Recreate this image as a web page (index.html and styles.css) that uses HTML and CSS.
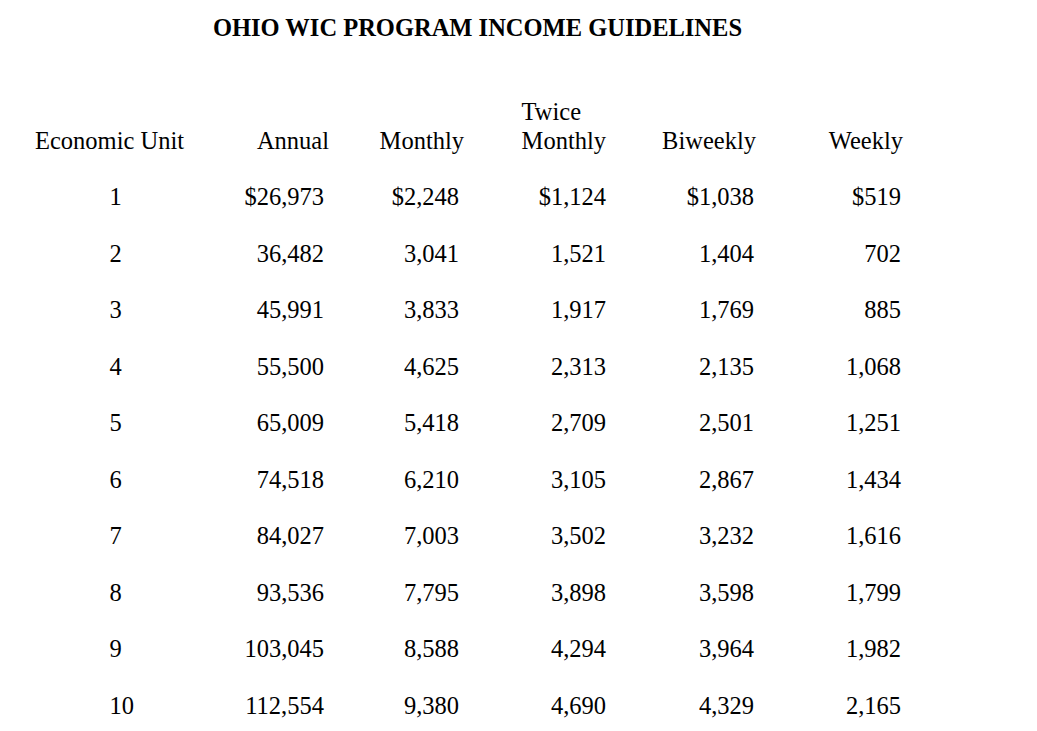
FILE: index.html
```html
<!DOCTYPE html>
<html lang="en">
<head>
<meta charset="utf-8">
<title>Ohio WIC Program Income Guidelines</title>
<link rel="stylesheet" href="styles.css">
</head>
<body>
<div class="page">
  <h1 class="title">OHIO WIC PROGRAM INCOME GUIDELINES</h1>
  <div class="table">
    <div class="th unit">Economic Unit</div>
    <div class="th annual">Annual</div>
    <div class="th monthly">Monthly</div>
    <div class="th twice">Twice<br>Monthly</div>
    <div class="th biweekly">Biweekly</div>
    <div class="th weekly">Weekly</div>

    <div class="td unit">1</div><div class="td annual">$26,973</div><div class="td monthly">$2,248</div><div class="td twice">$1,124</div><div class="td biweekly">$1,038</div><div class="td weekly">$519</div>
    <div class="td unit">2</div><div class="td annual">36,482</div><div class="td monthly">3,041</div><div class="td twice">1,521</div><div class="td biweekly">1,404</div><div class="td weekly">702</div>
    <div class="td unit">3</div><div class="td annual">45,991</div><div class="td monthly">3,833</div><div class="td twice">1,917</div><div class="td biweekly">1,769</div><div class="td weekly">885</div>
    <div class="td unit">4</div><div class="td annual">55,500</div><div class="td monthly">4,625</div><div class="td twice">2,313</div><div class="td biweekly">2,135</div><div class="td weekly">1,068</div>
    <div class="td unit">5</div><div class="td annual">65,009</div><div class="td monthly">5,418</div><div class="td twice">2,709</div><div class="td biweekly">2,501</div><div class="td weekly">1,251</div>
    <div class="td unit">6</div><div class="td annual">74,518</div><div class="td monthly">6,210</div><div class="td twice">3,105</div><div class="td biweekly">2,867</div><div class="td weekly">1,434</div>
    <div class="td unit">7</div><div class="td annual">84,027</div><div class="td monthly">7,003</div><div class="td twice">3,502</div><div class="td biweekly">3,232</div><div class="td weekly">1,616</div>
    <div class="td unit">8</div><div class="td annual">93,536</div><div class="td monthly">7,795</div><div class="td twice">3,898</div><div class="td biweekly">3,598</div><div class="td weekly">1,799</div>
    <div class="td unit">9</div><div class="td annual">103,045</div><div class="td monthly">8,588</div><div class="td twice">4,294</div><div class="td biweekly">3,964</div><div class="td weekly">1,982</div>
    <div class="td unit">10</div><div class="td annual">112,554</div><div class="td monthly">9,380</div><div class="td twice">4,690</div><div class="td biweekly">4,329</div><div class="td weekly">2,165</div>
  </div>
</div>
</body>
</html>
```

FILE: styles.css
```css
html, body {
  margin: 0;
  padding: 0;
  background: #ffffff;
}

body {
  font-family: "Liberation Serif", "Times New Roman", serif;
  font-size: 24.5px;
  color: #000000;
}

.page {
  width: 955px;
  padding-top: 13px;
}

.title {
  margin: 0;
  font-size: 24.5px;
  font-weight: bold;
  line-height: 30px;
  text-align: center;
}

.table {
  margin-top: 68px;
  display: grid;
  grid-template-columns: 200px 129px 135px 142px 150px 147px;
  grid-auto-rows: 56.5px;
  grid-template-rows: 58px;
  row-gap: 0;
}

.th {
  line-height: 29px;
  align-self: end;
  white-space: nowrap;
  margin-bottom: 14px;
  text-align: right;
}

.td {
  line-height: 56.5px;
  text-align: right;
  white-space: nowrap;
}

.th.unit {
  text-align: left;
  padding-left: 35px;
}

.td.unit {
  text-align: left;
  padding-left: 109.5px;
}

.th.twice {
  justify-self: end;
  text-align: left;
}

.td.annual,
.td.monthly {
  padding-right: 5px;
}

.td.biweekly,
.td.weekly {
  padding-right: 2px;
}
```
